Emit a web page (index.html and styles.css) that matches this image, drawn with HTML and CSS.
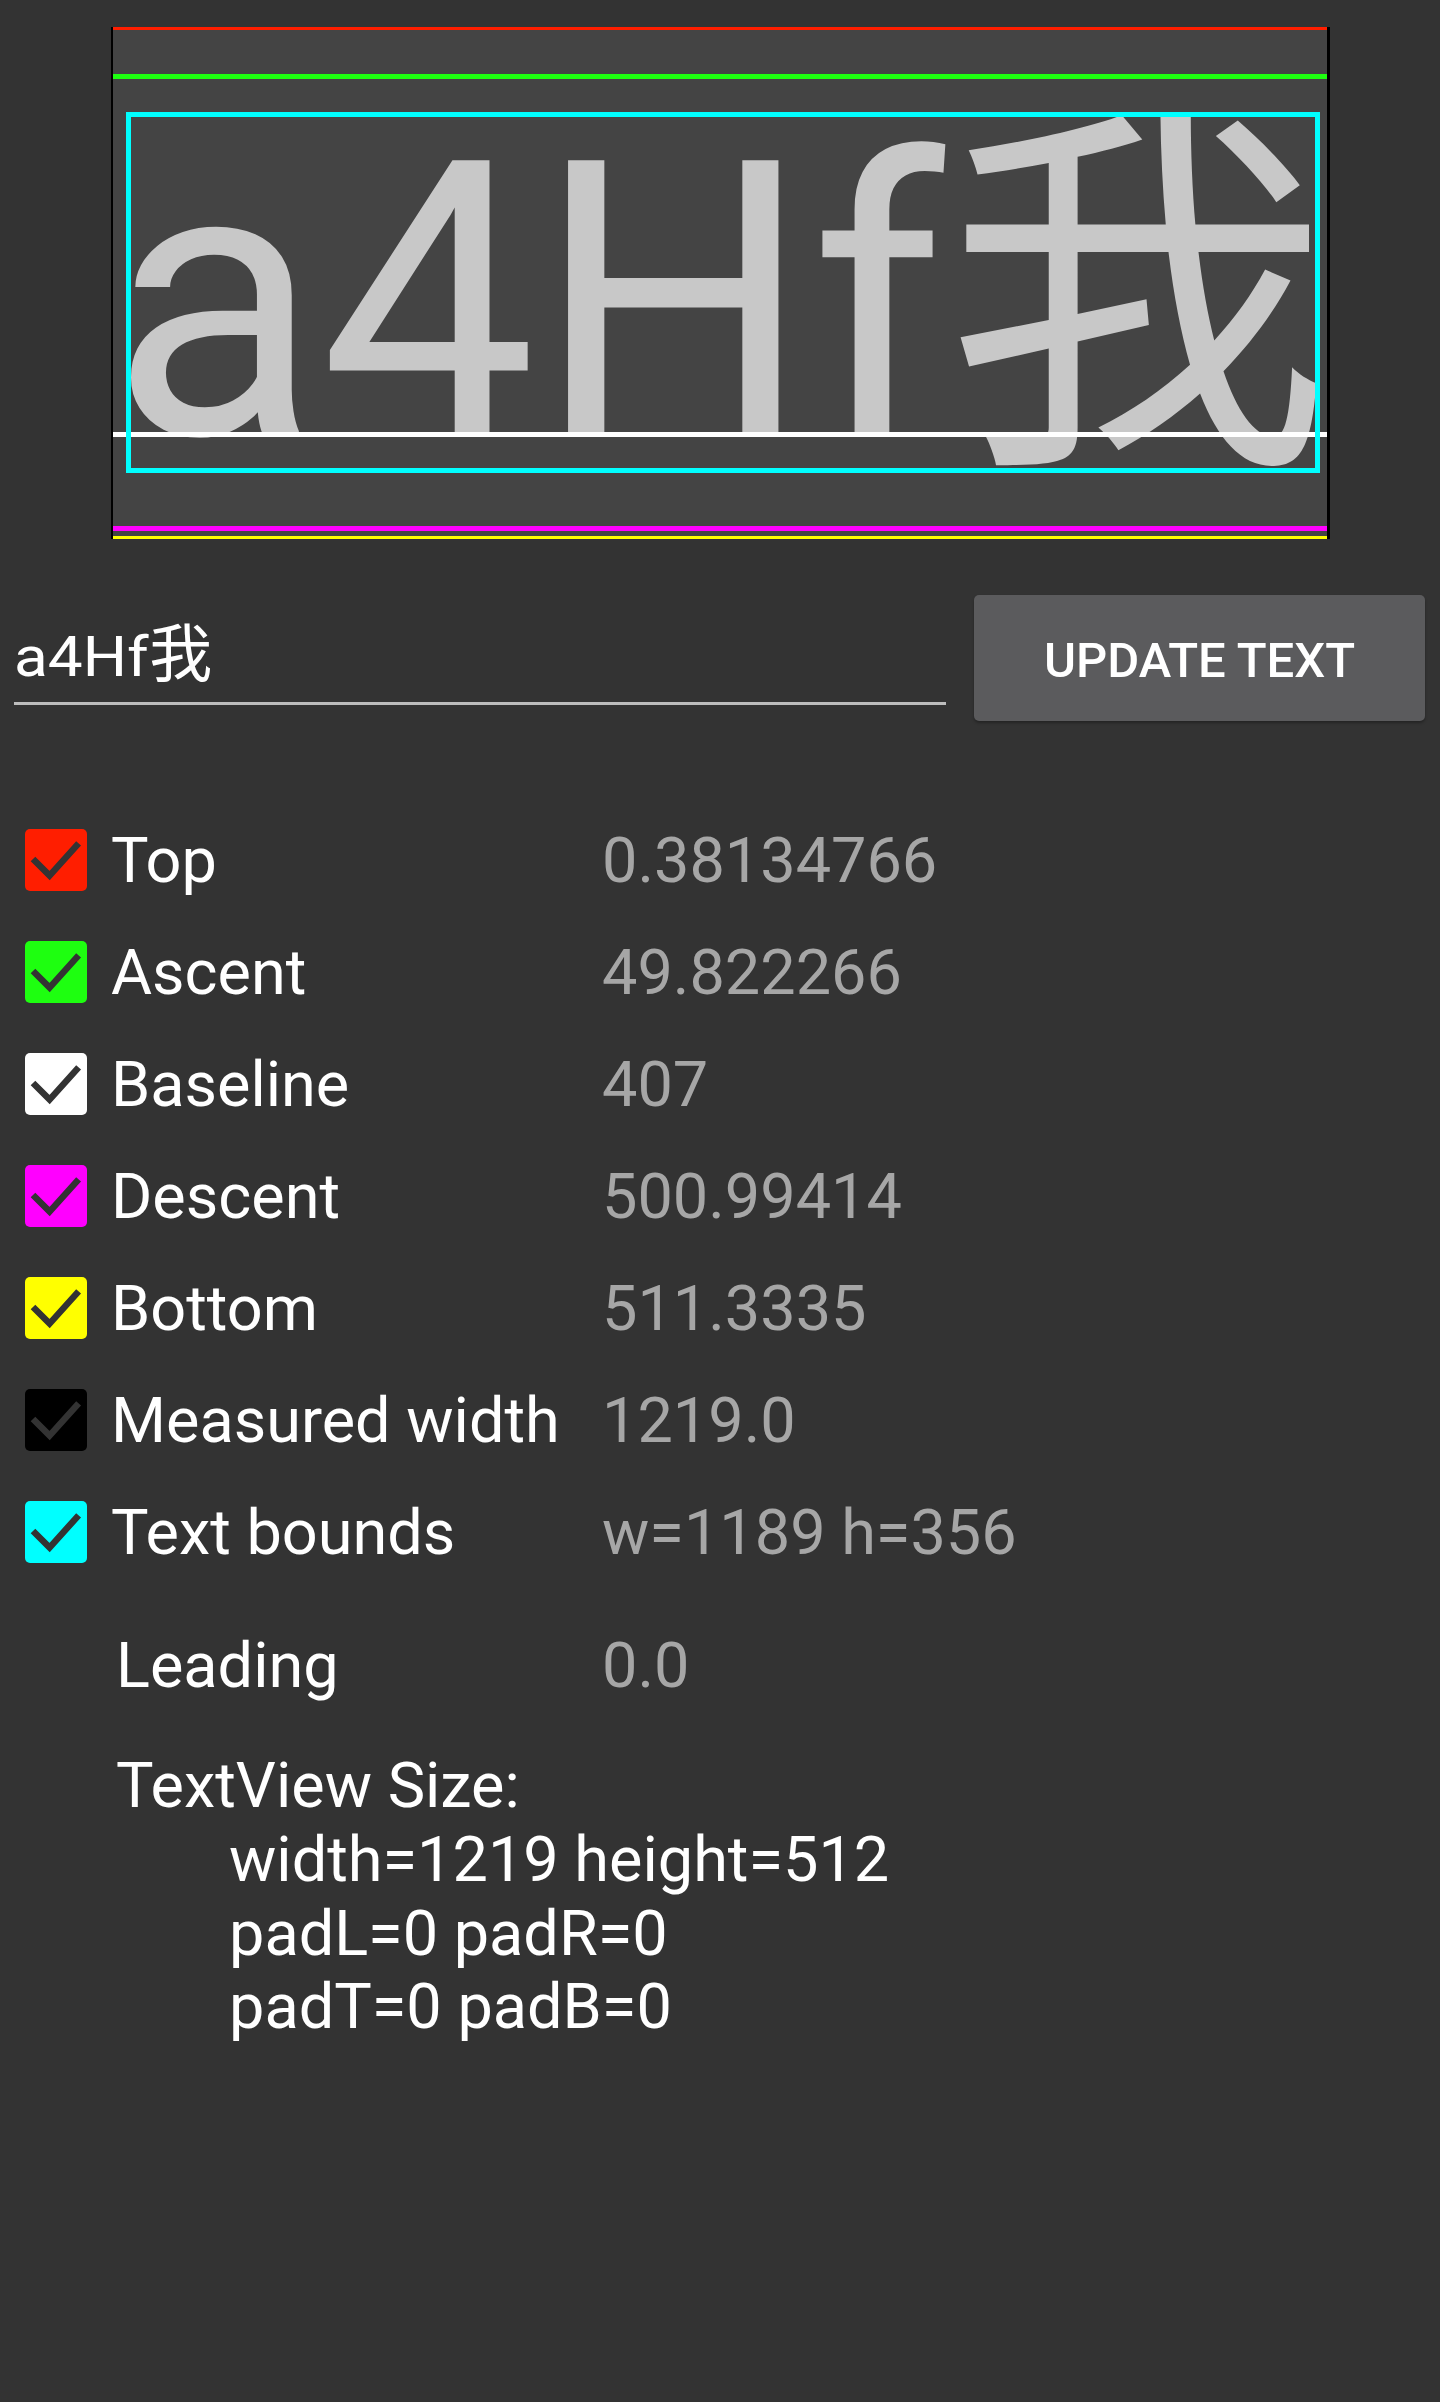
FILE: index.html
```html
<!DOCTYPE html>
<html lang="en">
<head>
<meta charset="utf-8">
<title>Font metrics</title>
<link rel="stylesheet" href="styles.css">
</head>
<body>
<div class="app">
  <div class="canvas">
    <div class="glyphs">a4Hf我</div>
    <div class="hline l-top"></div>
    <div class="hline l-ascent"></div>
    <div class="hline l-baseline"></div>
    <div class="hline l-descent"></div>
    <div class="hline l-bottom"></div>
    <div class="bounds"></div>
    <div class="vline v-left"></div>
    <div class="vline v-right"></div>
  </div>

  <div class="input-row">
    <div class="edit"><span class="edit-text"><span class="latin">a4Hf</span><span class="cjk">我</span></span></div>
    <div class="btn">UPDATE TEXT</div>
  </div>

  <div class="rows">
    <div class="row">
      <span class="cb cb-red"><svg viewBox="0 0 62 62"><path d="M8 30 L24.6 46.6 L53.6 14.3"/></svg></span>
      <span class="label">Top</span><span class="value">0.38134766</span>
    </div>
    <div class="row">
      <span class="cb cb-green"><svg viewBox="0 0 62 62"><path d="M8 30 L24.6 46.6 L53.6 14.3"/></svg></span>
      <span class="label">Ascent</span><span class="value">49.822266</span>
    </div>
    <div class="row">
      <span class="cb cb-white"><svg viewBox="0 0 62 62"><path d="M8 30 L24.6 46.6 L53.6 14.3"/></svg></span>
      <span class="label">Baseline</span><span class="value">407</span>
    </div>
    <div class="row">
      <span class="cb cb-magenta"><svg viewBox="0 0 62 62"><path d="M8 30 L24.6 46.6 L53.6 14.3"/></svg></span>
      <span class="label">Descent</span><span class="value">500.99414</span>
    </div>
    <div class="row">
      <span class="cb cb-yellow"><svg viewBox="0 0 62 62"><path d="M8 30 L24.6 46.6 L53.6 14.3"/></svg></span>
      <span class="label">Bottom</span><span class="value">511.3335</span>
    </div>
    <div class="row">
      <span class="cb cb-black"><svg viewBox="0 0 62 62"><path d="M8 30 L24.6 46.6 L53.6 14.3"/></svg></span>
      <span class="label">Measured width</span><span class="value">1219.0</span>
    </div>
    <div class="row">
      <span class="cb cb-cyan"><svg viewBox="0 0 62 62"><path d="M8 30 L24.6 46.6 L53.6 14.3"/></svg></span>
      <span class="label">Text bounds</span><span class="value">w=1189 h=356</span>
    </div>
  </div>

  <div class="leading-row">
    <span class="label">Leading</span><span class="value">0.0</span>
  </div>

  <div class="tv-size">
    <div class="tv-title">TextView Size:</div>
    <div class="tv-line">width=1219 height=512</div>
    <div class="tv-line">padL=0 padR=0</div>
    <div class="tv-line">padT=0 padB=0</div>
  </div>
</div>
</body>
</html>
```

FILE: styles.css
```css
html, body {
  margin: 0;
  padding: 0;
  background: #333333;
}

body {
  font-family: Roboto, "Noto Sans CJK SC", sans-serif;
  color: #ffffff;
}

.app {
  width: 1440px;
  min-height: 2402px;
  padding-top: 27px;
  box-sizing: border-box;
}

/* ---------- metrics canvas ---------- */
.canvas {
  position: relative;
  width: 1219px;
  height: 512px;
  margin: 0 auto;
  background: #444444;
  overflow: hidden;
  padding-top: 49.8px;
  box-sizing: border-box;
}

.glyphs {
  font-family: Roboto, "Noto Sans CJK SC", sans-serif;
  font-size: 385px;
  line-height: 451px;
  height: 451px;
  color: #c8c8c8;
  white-space: nowrap;
}

.hline {
  position: absolute;
  left: 0;
  right: 0;
  height: 5px;
}
.l-top { top: -2.1px; background: #ff1e00; }
.l-ascent { top: 47.3px; background: #1eff10; }
.l-baseline { top: 404.5px; background: #ffffff; }
.l-descent { top: 498.5px; background: #ff00ff; }
.l-bottom { top: 508.8px; background: #ffff00; }

.bounds {
  position: absolute;
  left: 15px;
  top: 85px;
  width: 1194px;
  height: 361px;
  box-sizing: border-box;
  border: 5px solid #00ffff;
}

.vline {
  position: absolute;
  top: 0;
  bottom: 0;
  width: 5px;
  background: #000000;
}
.v-left { left: -2.5px; }
.v-right { left: 1216.5px; }

/* ---------- input row ---------- */
.input-row {
  display: flex;
  align-items: flex-start;
  margin-top: 56px;
  padding: 0 15px 0 14px;
  height: 126px;
}

.edit {
  width: 932px;
  height: 110px;
  box-sizing: border-box;
  border-bottom: 3px solid #bdbdbd;
  padding-top: 30px;
}

.edit-text {
  display: block;
  font-size: 55px;
  line-height: 64.5px;
  color: #ffffff;
  white-space: nowrap;
}

.edit-text .latin {
  display: inline-block;
  transform: scaleX(1.13);
  transform-origin: left center;
  margin-right: 16px;
}

.edit-text .cjk {
  font-family: "Noto Sans CJK SC", sans-serif;
  font-size: 63px;
  line-height: 0;
}

.btn {
  margin-left: 28px;
  width: 451px;
  height: 126px;
  box-sizing: border-box;
  padding-top: 4px;
  display: flex;
  align-items: center;
  justify-content: center;
  background: #5b5b5d;
  border-radius: 5px;
  box-shadow: 0 2px 3px rgba(0, 0, 0, 0.3);
  font-size: 49px;
  font-weight: 500;
  color: #ffffff;
  white-space: nowrap;
}

/* ---------- metric rows ---------- */
.rows {
  margin-top: 84px;
}

.row {
  display: grid;
  grid-template-columns: 62px 515px auto;
  align-items: center;
  height: 112px;
  padding-left: 25px;
}

.row .cb {
  margin-top: -3px;
}

.row .label {
  padding-left: 24px;
  font-size: 63px;
  line-height: 73.8px;
  color: #ffffff;
  white-space: nowrap;
}

.value {
  font-size: 63px;
  line-height: 73.8px;
  color: #a6a6a6;
  white-space: nowrap;
}

.cb {
  display: block;
  width: 62px;
  height: 62px;
  border-radius: 5px;
}
.cb svg {
  display: block;
  width: 62px;
  height: 62px;
}
.cb path {
  fill: none;
  stroke: #333333;
  stroke-width: 6.5;
  stroke-linecap: butt;
  stroke-linejoin: miter;
}

.cb-red { background: #ff1e00; }
.cb-green { background: #1eff10; }
.cb-white { background: #ffffff; }
.cb-magenta { background: #ff00ff; }
.cb-yellow { background: #ffff00; }
.cb-black { background: #000000; }
.cb-cyan { background: #00ffff; }

/* ---------- leading + textview size ---------- */
.leading-row {
  display: grid;
  grid-template-columns: 486px auto;
  align-items: center;
  height: 112px;
  margin-top: 21.4px;
  padding-left: 116px;
}

.leading-row .label {
  font-size: 63px;
  line-height: 73.8px;
  color: #ffffff;
}

.tv-size {
  margin-top: 27px;
  padding-left: 116px;
  font-size: 63px;
  line-height: 73.6px;
  color: #ffffff;
}

.tv-line {
  padding-left: 113px;
  white-space: nowrap;
}
```
